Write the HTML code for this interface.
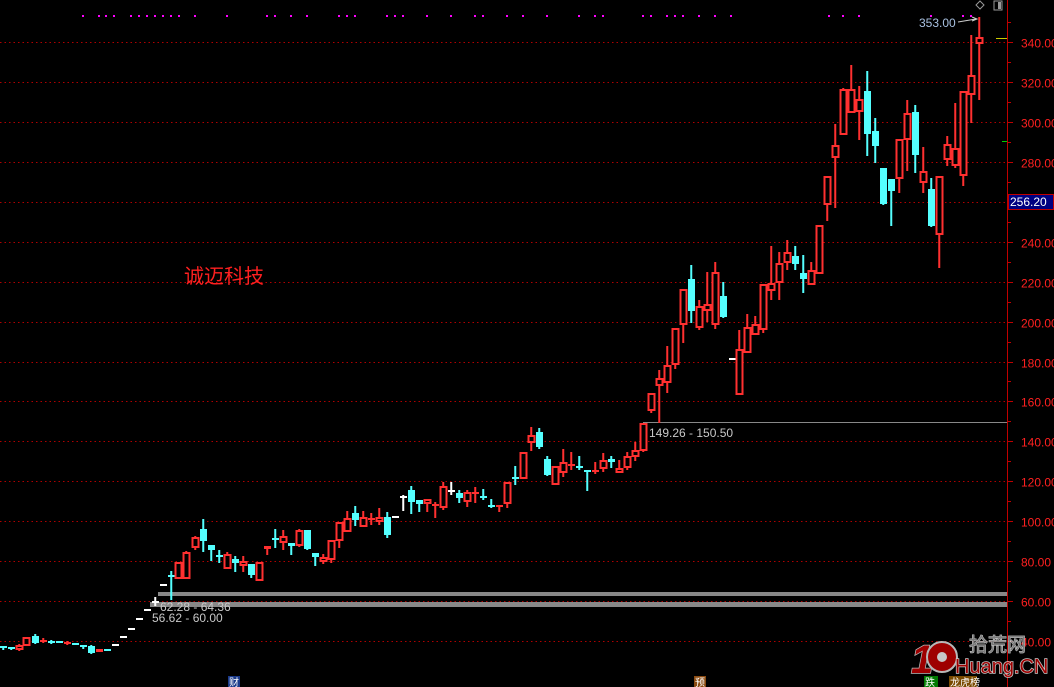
<!DOCTYPE html>
<html><head><meta charset="utf-8">
<style>
html,body{margin:0;padding:0;background:#000;width:1054px;height:687px;overflow:hidden}
svg{display:block}
text{font-family:"Liberation Sans","Noto Sans CJK SC",sans-serif}
</style></head>
<body>
<svg id="s" width="1054" height="687" xmlns="http://www.w3.org/2000/svg">
<rect width="1054" height="687" fill="#000"/>
<g id="grid"></g>
<!-- range bars -->
<rect x="158" y="592" width="849" height="4" fill="#888"/>
<rect x="150" y="602" width="857" height="5" fill="#888"/>
<line x1="643" y1="422.5" x2="1007" y2="422.5" stroke="#888" stroke-width="1"/>
<g id="c"></g>
<text x="649" y="437" fill="#c8c8c8" font-size="12">149.26 - 150.50</text>
<text x="160" y="611" fill="#c8c8c8" font-size="12">62.28 - 64.36</text>
<text x="152" y="622" fill="#c8c8c8" font-size="12">56.62 - 60.00</text>
<text x="184" y="283" fill="#ff2020" font-size="20">诚迈科技</text>
<text x="919" y="27" fill="#a8c0e0" font-size="12">353.00</text>
<path d="M958 22 L976 19" stroke="#ccc" stroke-width="1" fill="none"/>
<path d="M972 17 L977 19 L972 21" stroke="#ccc" stroke-width="1" fill="none"/>
<path d="M980 1 L984 5 L980 9 L976 5 Z" stroke="#999" fill="none"/>
<rect x="994" y="1" width="8" height="9" stroke="#999" fill="none"/>
<rect x="998" y="2" width="3" height="7" fill="#999"/>
<!-- axis -->
<line x1="1007.5" y1="0" x2="1007.5" y2="687" stroke="#c00000" stroke-width="1"/>
<g id="ax"></g>
<line x1="996" y1="38.5" x2="1007" y2="38.5" stroke="#cccc00"/>
<line x1="1002" y1="141.5" x2="1007" y2="141.5" stroke="#00cc00"/>
<rect x="1008.5" y="194.5" width="45" height="15" fill="#000080" stroke="#c00000"/>
<text x="1010" y="206" fill="#fff" font-size="12">256.20</text>
<!-- bottom markers -->
<rect x="228" y="676" width="12" height="11" fill="#1a3a8a"/>
<text x="229" y="686" fill="#fff" font-size="10">财</text>
<rect x="694" y="676" width="12" height="11" fill="#8a4a10"/>
<text x="695" y="686" fill="#fff" font-size="10">预</text>
<rect x="924" y="676" width="14" height="11" fill="#007a00"/>
<text x="925" y="686" fill="#fff" font-size="10">跌</text>
<rect x="949" y="676" width="28" height="11" fill="#7a4a00"/>
<text x="950" y="686" fill="#fff" font-size="10">龙虎榜</text>
<!-- watermark -->
<g opacity="0.9">
<text x="911" y="673" fill="#b00000" stroke="#ccc" stroke-width="1.5" font-size="40" font-weight="bold" font-style="italic" paint-order="stroke">1</text>
<circle cx="942" cy="657" r="15" fill="#b00000" stroke="#ccc" stroke-width="2"/>
<circle cx="942" cy="657" r="5" fill="#ddd"/>
<text x="969" y="651" fill="#888" stroke="#ddd" stroke-width="1" font-size="19" paint-order="stroke">拾荒网</text>
<text x="955" y="673" fill="#b00000" stroke="#ddd" stroke-width="1.5" font-size="20" paint-order="stroke">Huang.CN</text>
</g>
</svg>
<script>
var NS="http://www.w3.org/2000/svg";
function el(p,t,a){var e=document.createElementNS(NS,t);for(var k in a)e.setAttribute(k,a[k]);p.appendChild(e);return e;}
var g=document.getElementById('grid'),ax=document.getElementById('ax'),c=document.getElementById('c');
function Y(p){return 42+(340-p)*1.997;}
for(var p=40;p<=340;p+=20){var y=Math.round(Y(p))+0.5;
 el(g,'line',{x1:0,y1:y,x2:1007,y2:y,stroke:'#b00000','stroke-dasharray':'1.5 3','stroke-width':1});
 var t=el(ax,'text',{x:1021,y:y+5,fill:'#ff2020','font-size':12});t.textContent=p.toFixed(2);}
for(var p=30;p<=350;p+=10){var y=Math.round(Y(p))+0.5;el(ax,'line',{x1:1007,y1:y,x2:p%20?1011:1013,y2:y,stroke:'#c00000'});}
var dots=[83,99,106,114,131,139,147,155,163,171,179,195,227,267,275,291,307,339,347,355,387,395,403,427,451,475,483,507,523,547,579,595,603,643,651,667,675,683,699,715,731,829,843,859,931,963,971];
dots.forEach(function(x){el(c,'rect',{x:x-1,y:15,width:2,height:2,fill:'#ff00ff'});});
// x, top, bottom, hi, lo, type
var D=[
[3,646,647,646,650,'c'],[11,647,648,647,650,'c'],[19,645,649,644,651,'r'],[26,637,645,637,646,'r'],[35,636,643,634,644,'c'],[43,640,642,638,643,'r'],[51,641,642,640,644,'c'],[59,641,642,641,643,'c'],[67,642,643,641,645,'r'],[75,643,644,643,645,'c'],[83,645,646,645,649,'c'],[91,646,653,645,654,'c'],[99,649,652,649,652,'rf'],[107,649,650,649,651,'c'],
[115,644,645,644,645,'w'],[123,636,637,636,637,'w'],[131,628,629,628,629,'w'],[139,618,619,618,619,'w'],[147,609,610,609,610,'w'],[155,601,602,597,606,'w'],[163,584,585,584,585,'w'],[171,575,576,571,600,'c'],
[178,562,578,562,578,'r'],[186,552,578,551,578,'r'],[195,537,547,536,550,'r'],[203,529,541,519,552,'c'],[211,545,550,545,561,'c'],[219,555,556,550,563,'c'],[227,554,568,552,568,'r'],[235,559,563,556,572,'c'],[243,561,565,556,572,'r'],[251,564,575,564,578,'c'],[259,562,580,562,580,'r'],[267,546,549,546,555,'r'],[275,538,539,529,548,'c'],[283,536,542,530,550,'r'],[291,543,546,543,555,'c'],[299,530,545,529,547,'r'],[307,530,549,530,550,'c'],[315,553,557,553,566,'c'],[323,557,561,554,564,'r'],[331,540,559,540,563,'r'],[339,522,540,522,548,'r'],[347,518,531,511,531,'r'],[355,513,520,506,526,'c'],[363,517,526,511,526,'r'],[371,518,520,513,525,'r'],[379,517,521,508,525,'r'],[387,517,535,512,538,'c'],[395,516,517,516,517,'w'],
[403,496,497,495,511,'w'],[411,490,502,486,514,'c'],[419,500,504,500,512,'c'],[427,499,503,499,512,'r'],[435,504,506,502,518,'r'],[443,486,507,482,510,'r'],[451,490,491,482,495,'w'],[459,493,498,490,503,'c'],[467,492,501,490,507,'r'],[475,492,494,487,503,'r'],[483,496,497,489,500,'c'],[491,505,507,499,508,'c'],[499,505,507,505,512,'r'],[507,482,503,482,508,'r'],[515,477,478,466,485,'c'],[523,452,478,452,478,'r'],[531,435,442,427,451,'r'],[539,432,447,428,449,'c'],[547,459,475,456,476,'c'],[555,466,484,466,485,'r'],[563,462,472,449,477,'r'],[571,464,466,452,470,'r'],[579,466,468,456,470,'c'],[587,470,471,470,491,'c'],[595,470,472,462,474,'r'],[603,460,468,453,472,'r'],[611,459,462,456,468,'c'],[619,468,472,460,472,'r'],[627,456,467,452,470,'r'],[635,450,456,442,461,'r'],[643,423,450,423,452,'r'],
[651,393,410,393,413,'r'],[659,378,385,370,423,'r'],[667,365,382,346,393,'r'],[675,328,364,328,369,'r'],[683,289,324,289,343,'r'],[691,279,311,265,323,'c'],[699,306,327,300,330,'r'],[707,304,310,272,322,'r'],[715,272,324,262,329,'r'],[723,296,317,282,318,'c'],[732,358,359,358,359,'w'],[739,349,394,330,394,'r'],[747,327,352,314,352,'r'],[755,324,334,316,335,'r'],[763,284,329,284,333,'r'],[771,283,290,246,300,'r'],[779,263,282,252,300,'r'],[787,252,262,240,270,'r'],[795,256,264,246,270,'c'],[803,273,279,255,293,'c'],[811,270,284,262,284,'r'],[819,225,273,225,273,'r'],
[827,176,204,176,221,'r'],[835,145,157,124,208,'r'],[843,89,134,88,134,'r'],[851,89,112,65,113,'r'],[859,99,111,86,140,'r'],[867,91,134,71,156,'c'],[875,131,146,118,163,'c'],[883,168,204,168,205,'c'],[891,179,191,179,226,'c'],[899,139,178,139,193,'r'],[907,113,139,100,171,'r'],[915,112,155,105,173,'c'],[923,171,182,147,193,'r'],[931,189,226,178,227,'c'],[939,176,234,176,268,'r'],[947,144,159,136,166,'r'],[955,148,165,103,168,'r'],[963,91,175,91,186,'r'],[971,75,94,35,123,'r'],[979,37,43,17,100,'r']
];
D.forEach(function(d){var x=d[0],t=d[1],b=d[2],h=d[3],l=d[4],k=d[5];
 var col=k=='c'?'#54ffff':(k=='w'?'#ffffff':'#ff3030');
 if(k=='w'&&b-t<=1&&h==t&&l==b){el(c,'rect',{x:x-3,y:t,width:7,height:2,fill:col});return;}
 if(h<t)el(c,'rect',{x:x-0.75,y:h,width:2,height:t-h,fill:col});
 if(l>b)el(c,'rect',{x:x-0.75,y:b,width:2,height:l-b,fill:col});
 if(k=='r'&&b-t>3){el(c,'rect',{x:x-2.5,y:t+1,width:6,height:b-t-1,fill:'#000',stroke:col,'stroke-width':2});}
 else el(c,'rect',{x:x-3,y:t,width:7,height:Math.max(2,b-t),fill:col});
});
</script>
</body></html>
